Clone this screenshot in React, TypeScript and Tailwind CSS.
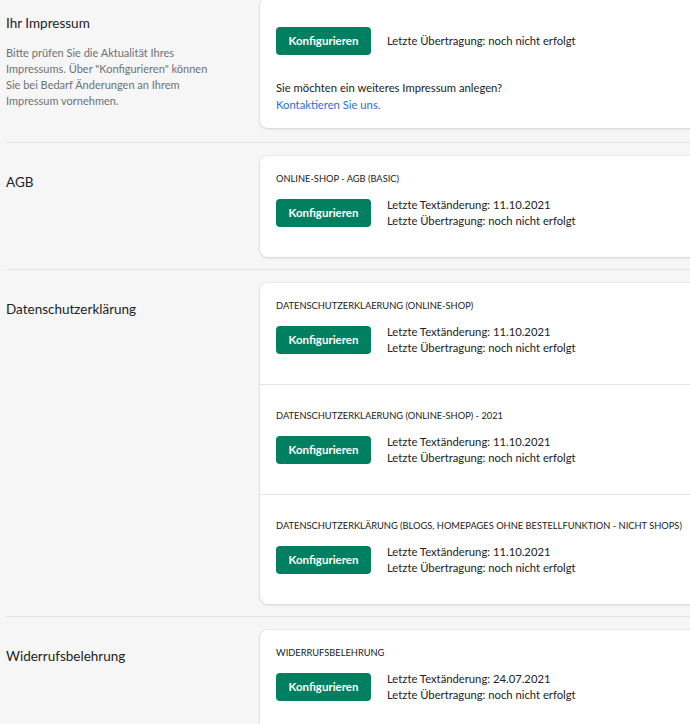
const font = { fontFamily: "Lato, 'Liberation Sans', sans-serif" };

type Item = { title: string; changed: string };

const sections: { label: string; items: Item[] }[] = [
  { label: "AGB", items: [{ title: "ONLINE-SHOP - AGB (BASIC)", changed: "11.10.2021" }] },
  {
    label: "Datenschutzerklärung",
    items: [
      { title: "DATENSCHUTZERKLAERUNG (ONLINE-SHOP)", changed: "11.10.2021" },
      { title: "DATENSCHUTZERKLAERUNG (ONLINE-SHOP) - 2021", changed: "11.10.2021" },
      { title: "DATENSCHUTZERKLÄRUNG (BLOGS, HOMEPAGES OHNE BESTELLFUNKTION - NICHT SHOPS)", changed: "11.10.2021" },
    ],
  },
  { label: "Widerrufsbelehrung", items: [{ title: "WIDERRUFSBELEHRUNG", changed: "24.07.2021" }] },
];

function Button() {
  return (
    <button className="h-[28px] w-[95px] rounded-[4px] bg-[#008060] text-white text-[11.5px] font-bold shrink-0">
      Konfigurieren
    </button>
  );
}

function Card({ children }: { children: React.ReactNode }) {
  return (
    <div className="flex-1 bg-white rounded-l-[8px] shadow-[0_0_0_1px_rgba(63,63,68,0.05),0_1px_3px_rgba(63,63,68,0.15)]">
      {children}
    </div>
  );
}

function ItemRow({ item, first }: { item: Item; first: boolean }) {
  return (
    <div className={`px-4 pb-[28px] ${first ? "pt-[16px]" : "pt-[24px] border-t border-[#e1e3e5]"}`}>
      <div className="text-[9.3px] leading-[14px] text-[#202223] uppercase">{item.title}</div>
      <div className="flex items-center gap-4 mt-[11px]">
        <Button />
        <div className="text-[11.25px] leading-[16px] text-[#202223]">
          <div>Letzte Textänderung: {item.changed}</div>
          <div>Letzte Übertragung: noch nicht erfolgt</div>
        </div>
      </div>
    </div>
  );
}

export default function App() {
  return (
    <div className="w-full h-[724px] overflow-hidden bg-[#f6f6f7]" style={font}>
      <div className="ml-[6px] w-[760px] -mt-[16px]">
        <div className="flex pt-[14px] pb-[14px]">
          <div className="w-[254px] pt-[15px]">
            <div className="text-[13.5px] leading-[20px] text-[#202223]">Ihr Impressum</div>
            <p className="mt-[12px] w-[212px] text-[11px] leading-[16px] text-[#6d7175]">
              Bitte prüfen Sie die Aktualität Ihres Impressums. Über "Konfigurieren" können Sie bei Bedarf Änderungen an Ihrem Impressum vornehmen.
            </p>
          </div>
          <Card>
            <div className="px-4 pt-[29px] pb-[15px]">
              <div className="flex items-center gap-4">
                <Button />
                <div className="text-[11.25px] leading-[16px] text-[#202223]">Letzte Übertragung: noch nicht erfolgt</div>
              </div>
              <div className="mt-[24px] text-[11.25px] leading-[17px] text-[#202223]">
                <div>Sie möchten ein weiteres Impressum anlegen?</div>
                <div className="text-[#2c6ecb]">Kontaktieren Sie uns.</div>
              </div>
            </div>
          </Card>
        </div>
        {sections.map((s) => (
          <div key={s.label} className="flex border-t border-[#e1e3e5] pt-[13px] pb-[12px]">
            <div className="w-[254px] pt-[16px]">
              <div className="text-[13.5px] leading-[20px] text-[#202223]">{s.label}</div>
            </div>
            <Card>
              {s.items.map((it, i) => (
                <ItemRow key={it.title} item={it} first={i === 0} />
              ))}
            </Card>
          </div>
        ))}
      </div>
    </div>
  );
}
